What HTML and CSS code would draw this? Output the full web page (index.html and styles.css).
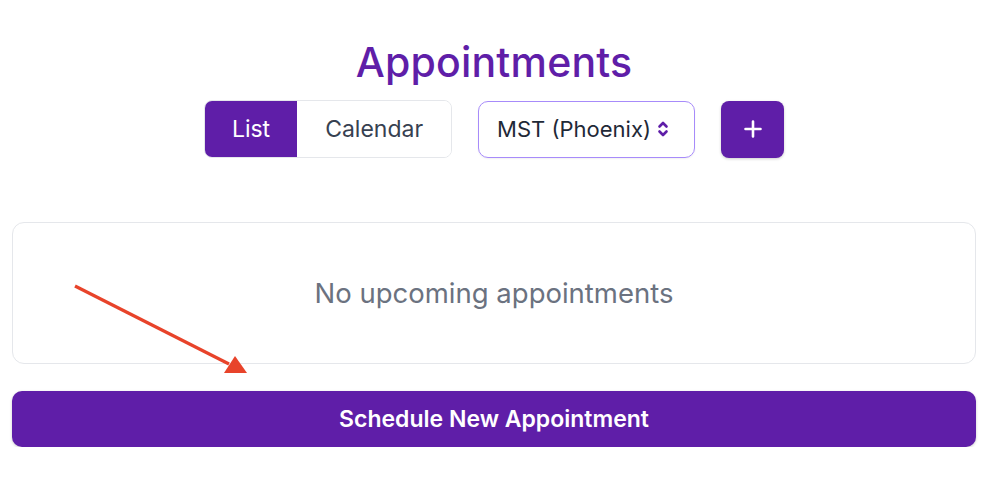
FILE: index.html
```html
<!DOCTYPE html>
<html>
<head>
<meta charset="utf-8">
<link rel="stylesheet" href="styles.css">
</head>
<body>
<div class="page">
  <h1 class="title">Appointments</h1>
  <div class="toolbar">
    <div class="toggle">
      <button class="seg seg-active">List</button>
      <button class="seg">Calendar</button>
    </div>
    <div class="select">
      <span>MST (Phoenix)</span>
      <svg class="chev" width="12" height="20" viewBox="0 0 12 20"><path d="M2.5 7.5 L6 4 L9.5 7.5 M2.5 12.5 L6 16 L9.5 12.5" fill="none" stroke="#5f1ea8" stroke-width="2.6" stroke-linecap="round" stroke-linejoin="round"/></svg>
    </div>
    <button class="plus">
      <svg width="20" height="20" viewBox="0 0 20 20"><path d="M10 2.5 V17.5 M2.5 10 H17.5" stroke="#fff" stroke-width="2.6" stroke-linecap="round"/></svg>
    </button>
  </div>
  <div class="card">
    <p class="empty">No upcoming appointments</p>
    <svg class="arrow" width="260" height="120" viewBox="0 0 260 120"><line x1="62" y1="13" x2="216" y2="91" stroke="#e8432a" stroke-width="3.2"/><polygon points="234,100 211,100 222,83" fill="#e8432a"/></svg>
  </div>
  <button class="schedule">Schedule New Appointment</button>
</div>
</body>
</html>
```
FILE: styles.css
```css
* { box-sizing: border-box; }
html, body { margin: 0; padding: 0; background: #fff; }
body { font-family: "Inter", "Noto Sans", sans-serif; }
.page { padding: 0 20px 0 12px; display: flex; flex-direction: column; align-items: stretch; }
.title { margin: 38px 0 0; text-align: center; color: #5f1ea8; font-size: 41px; font-weight: 500; line-height: 48px; letter-spacing: 0.2px; }
.toolbar { display: flex; justify-content: center; align-items: center; gap: 26px; margin-top: 14px; }
.toggle { display: flex; border: 1px solid #e5e7eb; border-radius: 8px; overflow: hidden; height: 58px; }
.seg { font-family: inherit; font-size: 23px; border: 0; background: #fff; color: #374151; padding: 0 28px; cursor: pointer; }
.seg-active { background: #5f1ea8; color: #fff; padding: 0 27px; }
.select { display: flex; align-items: center; gap: 6px; height: 57px; width: 217px; padding: 0 18px; border: 1px solid #a78bfa; border-radius: 10px; font-size: 22px; color: #1f2937; box-shadow: 0 1px 2px rgba(0,0,0,0.06); }
.plus { width: 63px; height: 57px; border: 0; border-radius: 8px; background: #5f1ea8; display: flex; align-items: center; justify-content: center; box-shadow: 0 1px 3px rgba(0,0,0,0.2); }
.card { position: relative; margin-top: 64px; height: 142px; border: 1px solid #e5e7eb; border-radius: 12px; display: flex; align-items: center; justify-content: center; }
.empty { margin: 0; font-size: 27.5px; color: #6b7280; }
.arrow { position: absolute; left: 0; top: 50px; }
.schedule { margin-top: 27px; height: 56px; border: 0; border-radius: 10px; background: #5f1ea8; color: #fff; font-family: inherit; font-size: 23px; font-weight: 600; box-shadow: 0 1px 3px rgba(0,0,0,0.2); }
```
